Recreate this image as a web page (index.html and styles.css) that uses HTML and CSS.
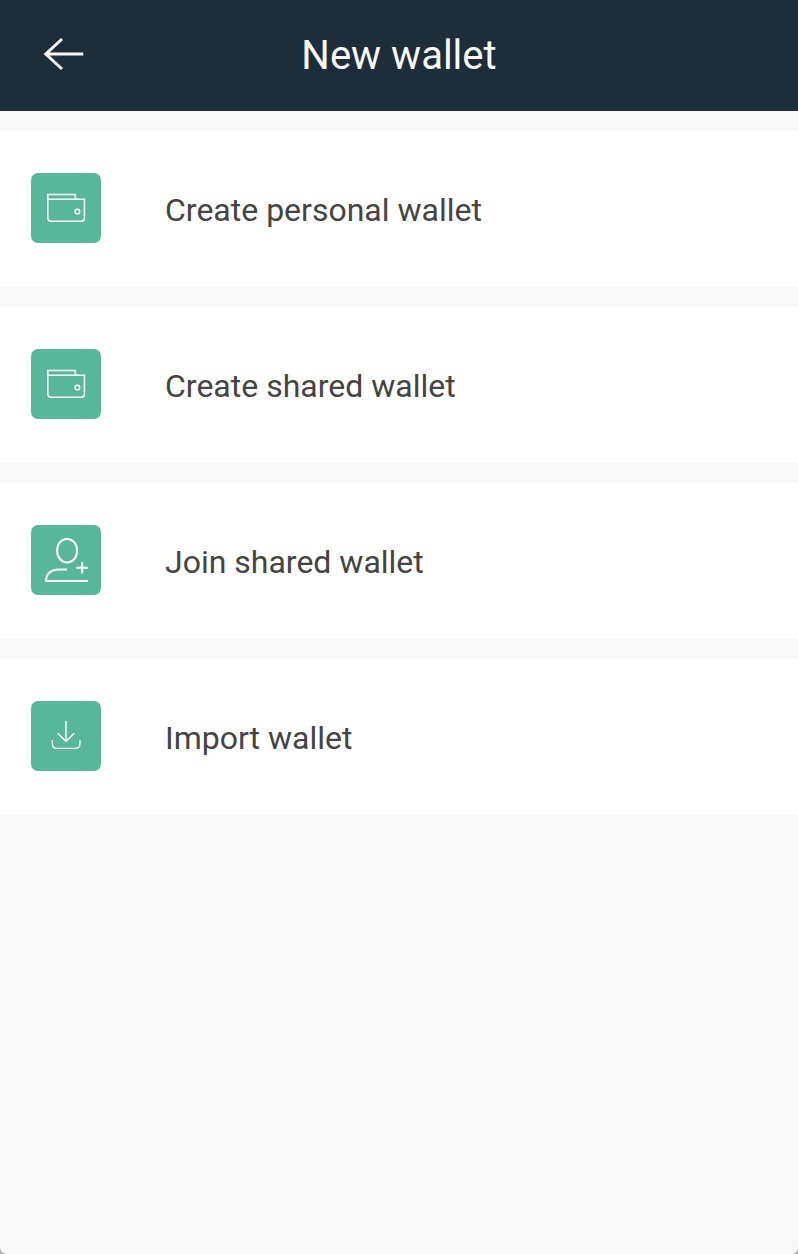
FILE: index.html
```html
<!DOCTYPE html>
<html lang="en">
<head>
<meta charset="utf-8">
<title>New wallet</title>
<link rel="stylesheet" href="styles.css">
</head>
<body>
<div class="screen">
  <header class="header">
    <a class="back" aria-label="Back">
      <svg width="42" height="34" viewBox="0 0 42 34"><path d="M40.3 17H2.5M19 2 2.8 17 19 32"/></svg>
    </a>
    <h1 class="title">New wallet</h1>
  </header>
  <main class="list">
    <div class="item">
      <span class="tile"><svg viewBox="0 0 70 70"><path d="M16.8 26.2H53.4V45.3Q53.4 48.2 50.4 48.2H19.8Q16.8 48.2 16.8 45.3V21.6H44.4V26.2"/><circle cx="46.4" cy="38.6" r="2.3"/></svg></span>
      <span class="label">Create personal wallet</span>
    </div>
    <div class="item">
      <span class="tile"><svg viewBox="0 0 70 70"><path d="M16.8 26.2H53.4V45.3Q53.4 48.2 50.4 48.2H19.8Q16.8 48.2 16.8 45.3V21.6H44.4V26.2"/><circle cx="46.4" cy="38.6" r="2.3"/></svg></span>
      <span class="label">Create shared wallet</span>
    </div>
    <div class="item">
      <span class="tile"><svg class="bold" viewBox="0 0 70 70"><rect x="26.2" y="14" width="19.8" height="23.4" rx="9.9" ry="10.8"/><path d="M36 44.4H27.5C19.5 44.4 15 49.5 15 56H57M51.2 37V48.6M45.4 42.7H57"/></svg></span>
      <span class="label">Join shared wallet</span>
    </div>
    <div class="item">
      <span class="tile"><svg class="fine" viewBox="0 0 70 70"><path d="M35 20V40.4M26.8 32.2 35 40.4 43.2 32.2M21.3 39V42.4Q21.3 47.4 26.3 47.4H43.9Q48.9 47.4 48.9 42.4V39"/></svg></span>
      <span class="label">Import wallet</span>
    </div>
  </main>
</div>
</body>
</html>
```
FILE: styles.css
```css
body {
  margin: 0;
  background: #b4b4b4;
  font-family: Roboto, sans-serif;
}

.screen {
  height: 1254px;
  overflow: hidden;
  background: #f8f8f8;
  border-radius: 0 0 7px 7px;
}

.header {
  display: grid;
  grid-template-columns: 120px 1fr 120px;
  align-items: center;
  height: 111px;
  background: #1e2d3a;
}

.back {
  display: flex;
  padding: 0 0 3px 43px;
}

.back svg {
  fill: none;
  stroke: #f8f8f8;
  stroke-width: 3;
}

.title {
  margin: 0;
  color: #f8f8f8;
  font-size: 40px;
  font-weight: 400;
  line-height: 48px;
  text-align: center;
}

.list {
  display: flex;
  flex-direction: column;
  gap: 20px;
  padding-top: 20px;
}

.item {
  display: flex;
  align-items: center;
  gap: 64px;
  box-sizing: border-box;
  height: 156px;
  padding: 0 31px 2px;
  background: #fff;
}

.tile {
  display: flex;
  width: 70px;
  height: 70px;
  background: #58b79b;
  border-radius: 7px;
}

.tile svg {
  width: 70px;
  height: 70px;
  fill: none;
  stroke: #fff;
  stroke-width: 1.5;
}

.tile .bold {
  stroke-width: 2;
}

.tile .fine {
  stroke-width: 1.4;
}

.label {
  padding-top: 4px;
  color: #444;
  font-size: 32px;
  line-height: 38px;
}
```
